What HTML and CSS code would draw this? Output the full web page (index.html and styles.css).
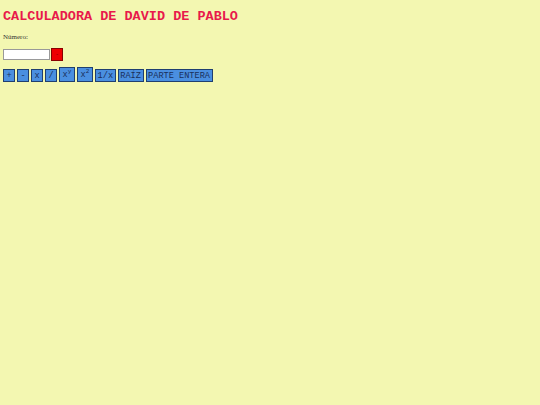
FILE: index.html
```html
<!DOCTYPE html>
<html lang="es">
<head>
<meta charset="utf-8">
<title>Calculadora</title>
<link rel="stylesheet" href="styles.css">
</head>
<body>
<h1 class="title">CALCULADORA DE DAVID DE PABLO</h1>
<p class="label">Número:</p>
<div class="entry">
  <input class="field" type="text">
  <button class="clear">-</button>
</div>
<div class="ops">
  <button class="op">+</button>
  <button class="op">-</button>
  <button class="op">x</button>
  <button class="op">/</button>
  <button class="op tall">x<sup>y</sup></button>
  <button class="op tall">x<sup>2</sup></button>
  <button class="op">1/x</button>
  <button class="op">RAÍZ</button>
  <button class="op">PARTE ENTERA</button>
</div>
</body>
</html>
```
FILE: styles.css
```css
html { background: #f3f7b1; }
body {
  margin: 0;
  padding: 10px 3px 0 3px;
  background: #f3f7b1;
  font-family: "Liberation Serif", serif;
}
.title {
  margin: 0;
  font-family: "Liberation Mono", monospace;
  font-weight: bold;
  font-size: 13.5px;
  line-height: 14px;
  color: #e8194b;
}
.label {
  margin: 9px 0 0 0;
  font-size: 7px;
  line-height: 8px;
  color: #333;
}
.entry {
  display: flex;
  align-items: center;
  gap: 1px;
  margin-top: 7px;
}
.field {
  width: 45px;
  height: 9px;
  padding: 0;
  margin: 0;
  border: 1px solid #999;
  background: #fff;
  box-sizing: content-box;
}
.clear {
  width: 12px;
  height: 13px;
  padding: 0;
  margin: 0;
  background: #ee0000;
  border: 1px solid #880000;
  color: #660000;
  font-size: 6px;
  line-height: 6px;
  font-family: "Liberation Mono", monospace;
}
.ops {
  display: flex;
  align-items: flex-end;
  gap: 2px;
  margin-top: 6px;
}
.op {
  height: 13px;
  min-width: 12px;
  padding: 0 1.6px;
  margin: 0;
  background: #4a8fe0;
  border: 1px solid #1f3f70;
  color: #1a2f5a;
  font-family: "Liberation Mono", monospace;
  font-size: 8.6px;
  line-height: 10px;
}
.op.tall {
  height: 15px;
  min-width: 16px;
}
.op sup {
  font-size: 6px;
  line-height: 0;
  vertical-align: 4px;
}
```
